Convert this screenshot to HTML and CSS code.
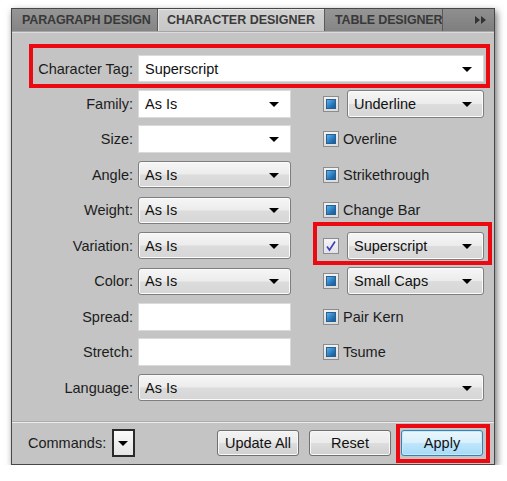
FILE: index.html
```html
<!DOCTYPE html>
<html lang="en">
<head>
    <meta charset="UTF-8">
    <title>Character Designer</title>
    <link rel="stylesheet" href="styles.css">
</head>
<body>
    <div class="window">
        <div class="tabs">
            <div class="tab tab-para">PARAGRAPH DESIGN</div>
            <div class="tab tab-char active">CHARACTER DESIGNER</div>
            <div class="tab tab-table">TABLE DESIGNER</div>
            <div class="tab-menu">
                <svg width="11" height="8" viewBox="0 0 11 8"><path d="M0 0 L5 4 L0 8 Z M6 0 L11 4 L6 8 Z" fill="#333"/></svg>
            </div>
        </div>

        <div class="panel">
            <div class="tag-row">
                <label class="tag-label">Character Tag:</label>
                <div class="field white combo">Superscript<span class="arrow"></span></div>
            </div>

            <div class="grid">
                <!-- row 1 -->
                <label class="lbl">Family:</label>
                <div class="field white combo">As Is<span class="arrow"></span></div>
                <div class="opt"><span class="check"></span><div class="field drop">Underline<span class="arrow"></span></div></div>

                <!-- row 2 -->
                <label class="lbl">Size:</label>
                <div class="field white combo"><span class="arrow"></span></div>
                <div class="opt"><span class="check"></span><span class="opt-text">Overline</span></div>

                <!-- row 3 -->
                <label class="lbl">Angle:</label>
                <div class="field drop">As Is<span class="arrow"></span></div>
                <div class="opt"><span class="check"></span><span class="opt-text">Strikethrough</span></div>

                <!-- row 4 -->
                <label class="lbl">Weight:</label>
                <div class="field drop">As Is<span class="arrow"></span></div>
                <div class="opt"><span class="check"></span><span class="opt-text">Change Bar</span></div>

                <!-- row 5 -->
                <label class="lbl">Variation:</label>
                <div class="field drop">As Is<span class="arrow"></span></div>
                <div class="opt callout callout-sup">
                    <span class="check checked">
                        <svg width="12" height="12" viewBox="0 0 12 12"><path d="M2 6.5 L4.5 10 L10 1.5" fill="none" stroke="#3b3fb8" stroke-width="1.6"/></svg>
                    </span>
                    <div class="field drop">Superscript<span class="arrow"></span></div>
                </div>

                <!-- row 6 -->
                <label class="lbl">Color:</label>
                <div class="field drop">As Is<span class="arrow"></span></div>
                <div class="opt"><span class="check"></span><div class="field drop">Small Caps<span class="arrow"></span></div></div>

                <!-- row 7 -->
                <label class="lbl">Spread:</label>
                <div class="field white"></div>
                <div class="opt"><span class="check"></span><span class="opt-text">Pair Kern</span></div>

                <!-- row 8 -->
                <label class="lbl">Stretch:</label>
                <div class="field white"></div>
                <div class="opt"><span class="check"></span><span class="opt-text">Tsume</span></div>

                <!-- row 9 -->
                <label class="lbl">Language:</label>
                <div class="field drop wide">As Is<span class="arrow"></span></div>
            </div>

            <div class="footer">
                <label class="cmd-label">Commands:</label>
                <div class="cmd-box"><span class="arrow"></span></div>
                <div class="buttons">
                    <button class="btn">Update All</button>
                    <button class="btn">Reset</button>
                    <div class="callout callout-apply"><button class="btn btn-primary">Apply</button></div>
                </div>
            </div>
        </div>
    </div>
</body>
</html>
```

FILE: styles.css
```css
/* Character Designer panel, grey dialog look */
body {
    margin: 0;
    background: #ffffff;
    font-family: 'Liberation Sans', Arial, sans-serif;
    font-size: 14.5px;
    color: #1c1c1c;
}

.window {
    box-sizing: border-box;
    width: 484px;
    height: 457px;
    margin: 8px 0 0 11px;
    border: 1px solid #474747;
    background: #c4c4c4;
    box-shadow: 2px 3px 7px rgba(0, 0, 0, 0.55);
    display: flex;
    flex-direction: column;
}

/* ---- tabs ---- */
.tabs {
    display: flex;
    height: 22px;
    background: linear-gradient(#8f8f8f, #7e7e7e);
    border-bottom: 1px solid #a6a6a6;
}

.tab {
    box-sizing: border-box;
    height: 22px;
    padding: 0 0 0 10px;
    line-height: 22px;
    font-size: 12.5px;
    font-weight: 700;
    letter-spacing: -0.15px;
    color: #383838;
    white-space: nowrap;
    overflow: hidden;
    border-right: 1px solid #5a5a5a;
    background: linear-gradient(#969696, #858585);
}

.tab-para { width: 146px; }
.tab-char { width: 167px; padding-left: 9px; letter-spacing: 0; }
.tab-table { width: 118px; }

.tab.active {
    background: linear-gradient(#d2d2d2, #c6c6c6);
    color: #3a3a3a;
    box-shadow: inset 1px 1px 0 #e6e6e6;
}

.tab-menu {
    flex: 1;
    display: flex;
    justify-content: flex-end;
    align-items: center;
    padding-right: 8px;
}

/* ---- panel ---- */
.panel {
    flex: 1;
    display: flex;
    flex-direction: column;
    box-shadow: inset 0 1px 0 #dcdcdc;
}

.tag-row {
    display: flex;
    align-items: center;
    margin: 12px 4px 0 17px;
    padding: 7px 2px 2px 0;
    border: 4px solid #ec0a12;
}

.tag-label {
    width: 100px;
    margin-right: 5px;
    text-align: right;
}

.tag-row .field {
    flex: 1;
    height: 27px;
}

.grid {
    display: grid;
    grid-template-columns: 126px 153px 1fr;
    grid-template-rows: repeat(9, 35.5px);
    align-items: center;
    margin: -2px 10px 0 0;
}

.lbl {
    padding-right: 5px;
    text-align: right;
}

/* ---- fields ---- */
.field {
    box-sizing: border-box;
    position: relative;
    height: 28px;
    padding: 0 24px 0 6px;
    display: flex;
    align-items: center;
    color: #111;
    white-space: nowrap;
}

.white {
    background: #ffffff;
    border: 1px solid #dadada;
}

.drop {
    height: 27px;
    border: 1px solid #7e7e7e;
    border-radius: 3px;
    background: linear-gradient(#f6f6f6 0%, #ececec 48%, #dcdcdc 52%, #d6d6d6 100%);
    box-shadow: inset 0 0 0 1px #fbfbfb;
}

.wide {
    grid-column: 2 / 4;
}

.arrow {
    position: absolute;
    right: 11px;
    top: 50%;
    margin-top: -2px;
    width: 0;
    height: 0;
    border-left: 5px solid transparent;
    border-right: 5px solid transparent;
    border-top: 5px solid #000;
}

/* ---- options column ---- */
.opt {
    display: flex;
    align-items: center;
    margin-left: 32px;
    gap: 4px;
}

.opt .field {
    flex: 1;
    margin-left: 4px;
    height: 28px;
}

.check {
    box-sizing: border-box;
    width: 16px;
    height: 16px;
    flex: none;
    padding: 2px;
    border: 1px solid #8c8c8c;
    background: linear-gradient(#f2f2f2, #dcdcdc);
}

.check::before {
    content: "";
    display: block;
    box-sizing: border-box;
    width: 10px;
    height: 10px;
    border: 1px solid #2c5f8c;
    background: linear-gradient(135deg, #5cb2e8, #1e6fb4 70%, #175c98);
}

.check.checked {
    padding: 1px;
    background: linear-gradient(#f4f4f6, #e2e2e8);
}

.check.checked::before {
    display: none;
}

.check.checked svg {
    display: block;
}

.opt-text {
    white-space: nowrap;
}

/* red annotation frames drawn over the dialog */
.callout {
    position: relative;
}

.callout::after {
    content: "";
    position: absolute;
    border: 4px solid #ec0a12;
    pointer-events: none;
}

.callout-sup::after {
    left: -10px;
    right: -8px;
    top: -10px;
    bottom: -5px;
}

.callout-apply::after {
    left: -5px;
    right: -7px;
    top: -6px;
    bottom: -7px;
}

/* ---- footer ---- */
.footer {
    margin-top: auto;
    height: 42px;
    box-sizing: border-box;
    display: flex;
    align-items: center;
    padding: 0 11px 1px 16px;
    border-top: 1px solid #ececec;
    box-shadow: 0 -1px 0 #acacac;
}

.cmd-label {
    margin-right: 6px;
}

.cmd-box {
    box-sizing: border-box;
    position: relative;
    width: 23px;
    height: 28px;
    border: 2px solid #2a2a2a;
    background: linear-gradient(#fafafa, #e4e4e4);
}

.cmd-box .arrow {
    right: 5px;
}

.buttons {
    margin-left: auto;
    display: flex;
    align-items: center;
    gap: 10px;
}

.btn {
    box-sizing: border-box;
    width: 82px;
    height: 26px;
    padding: 0;
    font-family: inherit;
    font-size: 14.5px;
    color: #111;
    border: 1px solid #707070;
    border-radius: 3px;
    background: linear-gradient(#f3f3f3 0%, #ebebeb 48%, #dddddd 52%, #cfcfcf 100%);
    box-shadow: inset 0 0 0 1px #f8f8f8;
}

.btn-primary {
    display: block;
    border-color: #3c7fb1;
    background: linear-gradient(#eaf6fd 0%, #d9f0fc 48%, #bee6fd 52%, #a7d9f5 100%);
    box-shadow: inset 0 0 0 1px #c4ecff;
}
```
